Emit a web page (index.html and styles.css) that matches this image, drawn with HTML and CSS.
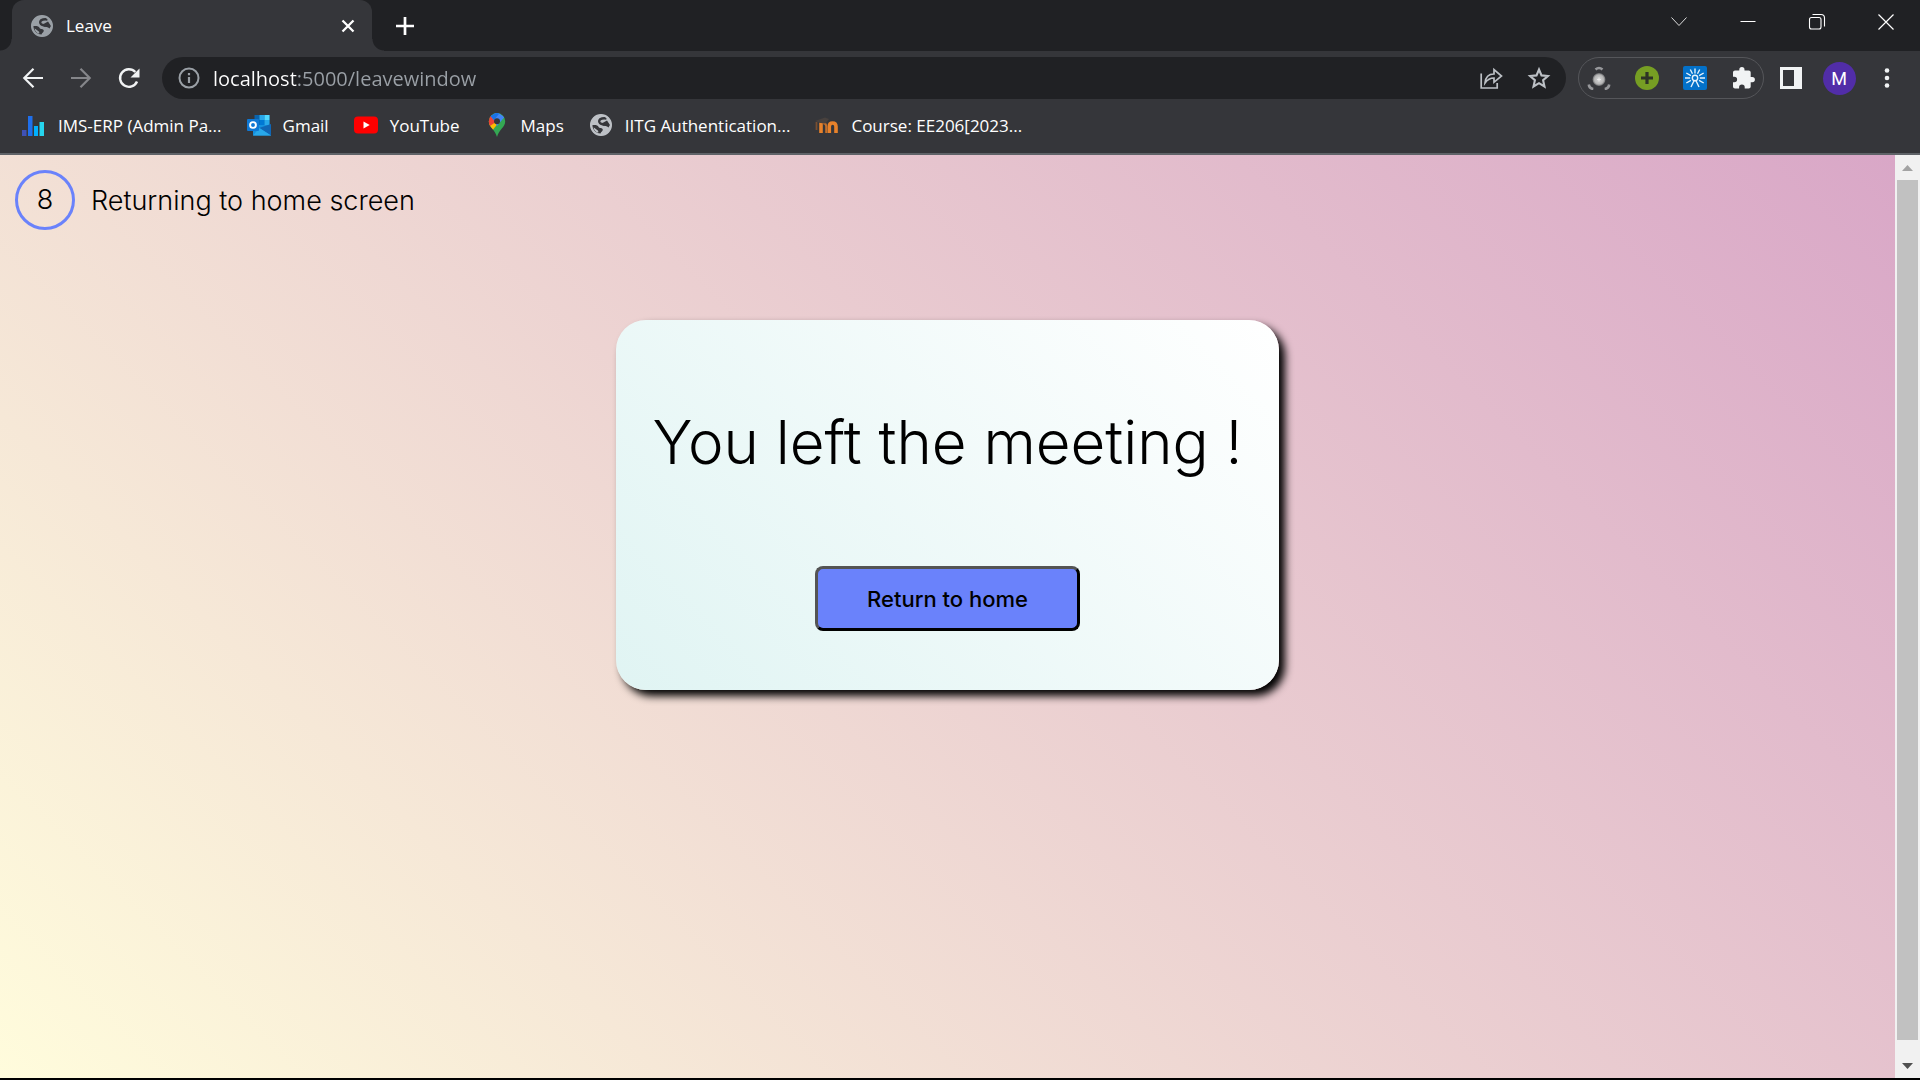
FILE: index.html
```html
<!DOCTYPE html>
<html lang="en">
<head>
<meta charset="utf-8">
<title>Leave</title>
<link rel="stylesheet" href="styles.css">
</head>
<body>
<svg class="defs" aria-hidden="true">
  <symbol id="globe" viewBox="0 0 24 24">
    <circle cx="12" cy="12" r="10.500" fill="currentColor"/>
    <path d="M17.500 5.500C14.500 4.800 11 5.500 10.300 7.500S11.500 11 14 11.200" fill="none" stroke="#35363a" stroke-width="2.400"/>
    <path d="M13.500 10L18 7.500 21 12l-1.500 2.500C18 12.500 15 13.500 13.500 12.400z" fill="#35363a"/>
    <path d="M3.300 12.200C6 11.800 8.800 12 9.600 14C10.200 15.500 13.500 14.500 13.800 16.500C14 18.300 12 18.500 11.500 20.600C7 20.500 3.300 17 3.300 12.200z" fill="#35363a"/>
    <path d="M4.500 14.500C6 15 7 16.500 8.500 17.200C9.500 17.800 9.500 19 9 19.800C6.500 19 4.800 17 4.500 14.500z" fill="currentColor"/>
    <circle cx="12" cy="12" r="10" fill="none" stroke="currentColor" stroke-width="2"/>
  </symbol>
</svg>

<header class="browser">
  <div class="tabstrip">
    <div class="tab">
      <svg class="icon tab-globe"><use href="#globe"/></svg>
      <span class="tab-title">Leave</span>
      <button class="plain tab-close" aria-label="Close tab"><svg class="icon" viewBox="0 0 24 24"><path d="M6.500 6.500l11 11M17.500 6.500l-11 11" stroke="#fff" stroke-width="2.300"/></svg></button>
    </div>
    <button class="plain new-tab" aria-label="New tab"><svg class="icon" viewBox="0 0 24 24"><path d="M12 3v18M3 12h18" stroke="#fff" stroke-width="2.700"/></svg></button>
    <div class="window-controls">
      <button class="plain" aria-label="Search tabs"><svg class="icon" viewBox="0 0 24 24" fill="none" stroke="#ddd" stroke-width="1"><path d="M4.500 7.500l7.500 8 7.500-8"/></svg></button>
      <button class="plain" aria-label="Minimize"><svg class="icon" viewBox="0 0 24 24"><path d="M4.500 11h15v1h-15z" fill="#fff"/></svg></button>
      <button class="plain" aria-label="Restore"><svg class="icon" viewBox="0 0 24 24" fill="none" stroke="#fff" stroke-width="1.100"><rect x="4.500" y="7.500" width="11.500" height="11.500" rx="2"/><path d="M7.500 4.500h8.500q3.500 0 3.500 3.500v8.500"/></svg></button>
      <button class="plain" aria-label="Close"><svg class="icon" viewBox="0 0 24 24"><path d="M4.500 4.500l15 15M19.500 4.500l-15 15" stroke="#fff" stroke-width="1.200"/></svg></button>
    </div>
  </div>

  <div class="toolbar">
    <button class="plain slot" aria-label="Back"><svg class="icon" viewBox="0 0 24 24" fill="none" stroke="#f1f3f4" stroke-width="2.200"><path d="M22 12H4M12.500 2.800L3.300 12l9.200 9.200"/></svg></button>
    <button class="plain slot" aria-label="Forward"><svg class="icon" viewBox="0 0 24 24" fill="none" stroke="#85868a" stroke-width="2.200"><path d="M2 12h18M11.500 2.800l9.200 9.200-9.200 9.200"/></svg></button>
    <button class="plain slot" aria-label="Reload"><svg class="icon" viewBox="0 0 24 24"><path d="M20 15.500A8.800 8.800 0 1 1 18.300 6" fill="none" stroke="#f1f3f4" stroke-width="2.400"/><path d="M22.500 2.500v9h-9z" fill="#f1f3f4"/></svg></button>
    <div class="omnibox">
      <svg class="icon" viewBox="0 0 24 24"><circle cx="12" cy="12" r="9.500" fill="none" stroke="#9aa0a6" stroke-width="2"/><path d="M10.900 11h2.200v6h-2.200zM10.900 7h2.200v2.200h-2.200z" fill="#9aa0a6"/></svg>
      <input class="url" type="text" aria-label="Address" value="localhost:5000/leavewindow">
      <button class="plain slot" aria-label="Share"><svg class="icon" viewBox="0 0 24 24" fill="none" stroke="#bdc1c6" stroke-width="1.700"><path d="M2.200 7.500v14.500h16v-5"/><path d="M6 17c.5-6 3.500-9 9-9V3.500L22.500 10 15 16.300V12c-4 0-6.500 1.500-9 5z"/></svg></button>
      <button class="plain slot" aria-label="Bookmark"><svg class="icon" viewBox="0 0 24 24"><path d="M12 3.500l2.500 5.900 6.400.6-4.800 4.200 1.400 6.300L12 17.200l-5.500 3.300 1.400-6.300L3.100 10l6.400-.6z" fill="none" stroke="#bdc1c6" stroke-width="2.100"/></svg></button>
    </div>
    <div class="extensions">
      <button class="plain" aria-label="Drone extension"><svg class="icon" viewBox="0 0 24 24"><defs><radialGradient id="ball"><stop offset="0" stop-color="#d8d8d8"/><stop offset=".7" stop-color="#b5b5b5"/><stop offset="1" stop-color="#66676a"/></radialGradient></defs><circle cx="12" cy="13.500" r="6.500" fill="url(#ball)"/><path d="M10 13.500h4M12 11.500v4" stroke="#eee" stroke-width=".8"/><g fill="none" stroke="#97989b" stroke-width="2.600"><path d="M8.500 3.500q3.500-3 7 0"/><path d="M1.800 18.500q.5 4 4.500 4.500"/><path d="M22.200 18.500q-.5 4-4.500 4.500"/></g></svg></button>
      <button class="plain" aria-label="Add extension"><svg class="icon" viewBox="0 0 24 24"><circle cx="12" cy="12" r="12" fill="#769e23"/><path d="M12 6v12M6 12h12" stroke="#2e3426" stroke-width="3.200"/></svg></button>
      <button class="plain" aria-label="Burst extension"><svg class="icon" viewBox="0 0 24 24"><rect width="24" height="24" rx="2" fill="#0371c9"/><g fill="none" stroke="#e5f2fb" stroke-width="1.400"><circle cx="12" cy="12" r="2.700"/><path d="M12 2.500v5M7.300 3.500l2.200 4.200M16.700 3.500l-2.200 4.200M3.300 7l4.600 2.600M20.700 7l-4.600 2.600M2 12h5.200M22 12h-5.200M3.300 17l4.600-2.600M20.700 17l-4.600-2.600M11 14.700l-3 6.300M13 14.700l3 6.300"/></g></svg></button>
      <button class="plain" aria-label="Extensions"><svg class="icon" viewBox="0 0 24 24"><path d="M21.300 11h-1.600V6.500c0-1.100-.9-2-2-2h-4.200V3.700a2.600 2.600 0 0 0-5.200 0v.8H4c-1.100 0-2 .9-2 2v4.200h1.300a2.800 2.800 0 0 1 0 5.600H2v4.200c0 1.100.9 2 2 2h4.100v-1.200a2.800 2.800 0 0 1 5.600 0v1.200h4c1.100 0 2-.9 2-2v-4.300h1.600a2.600 2.600 0 0 0 0-5.200z" fill="#f1f3f4"/></svg></button>
    </div>
    <button class="plain slot" aria-label="Side panel"><svg class="icon" viewBox="0 0 24 24"><path d="M1 1h22v22H1zM4 4v16h11V4z" fill="#f1f3f4" fill-rule="evenodd"/></svg></button>
    <button class="plain slot" aria-label="Profile"><span class="avatar">M</span></button>
    <button class="plain slot" aria-label="Menu"><svg class="icon" viewBox="0 0 24 24" fill="#f1f3f4"><circle cx="12" cy="4.500" r="2.300"/><circle cx="12" cy="12" r="2.300"/><circle cx="12" cy="19.500" r="2.300"/></svg></button>
  </div>

  <nav class="bookmarks" aria-label="Bookmarks">
    <a href="#"><svg class="icon" viewBox="0 0 24 24"><path d="M0 17h4.500v6H0z" fill="#3f51b5"/><path d="M6 3h4.500v20H6z" fill="#1f6feb"/><path d="M12 13h4v10h-4z" fill="#00b0ff"/><path d="M17.500 9H22v14h-4.500z" fill="#26d5ee"/></svg>IMS-ERP (Admin Pa...</a>
    <a href="#"><svg class="icon" viewBox="0 0 24 24"><path d="M7.500 2h15v10h-15z" fill="#0a64ad"/><path d="M12.500 2h5v5h-5z" fill="#28a8ea"/><path d="M17.500 2h5v5h-5z" fill="#50d9ff"/><path d="M12.500 7h5v5h-5z" fill="#0078d4"/><path d="M17.500 7h5v5h-5z" fill="#28a8ea"/><path d="M6 12h18v10.500H6z" fill="#1490df"/><path d="M24 11v11.500L12 15z" fill="#1066b5"/><path d="M6 22.500h18L12.500 15z" fill="#28a8ea"/><rect y="6" width="12" height="12" rx="1" fill="#0f78d4"/><circle cx="6" cy="12" r="2.900" fill="none" stroke="#fff" stroke-width="1.900"/></svg>Gmail</a>
    <a href="#"><svg class="icon" viewBox="0 0 24 24"><rect y="3.500" width="24" height="17" rx="4" fill="#f00"/><path d="M9.500 8.500v7l6.200-3.500z" fill="#fff"/></svg>YouTube</a>
    <a href="#"><svg class="icon" viewBox="0 0 24 24"><defs><clipPath id="pin"><path d="M12 0a8.200 8.200 0 0 1 8.200 8.200c0 6.300-6.200 8-8.200 15.800C10 16.200 3.800 14.500 3.800 8.200A8.200 8.200 0 0 1 12 0z"/></clipPath></defs><g clip-path="url(#pin)"><path d="M0 0h24v24H0z" fill="#34a853"/><path d="M0 9l6-1 8 1-7 9-7-1z" fill="#fbbc04"/><path d="M0 2h5.600l6.400 6.200-7.500 5L0 9z" fill="#ea4335"/><path d="M5.500 3L12-1l7.500 5-7.500 9-2.500-5z" fill="#4285f4"/><path d="M5.500 3L12-1l2.500 1.300L9 7z" fill="#1a73e8"/></g><circle cx="12" cy="8.200" r="3" fill="#35363a"/></svg>Maps</a>
    <a href="#"><svg class="icon link-globe"><use href="#globe"/></svg>IITG Authentication...</a>
    <a href="#"><svg class="icon" viewBox="0 0 24 24"><path d="M6 20V9.500M14.300 20v-6.500q0-3.500 3.300-3.500t3.400 3.500V20" fill="none" stroke="#e8822b" stroke-width="3.600"/><path d="M8.200 10.200q3 0 3 3.300V20" fill="none" stroke="#c46f2b" stroke-width="2"/><path d="M0 8l10-3.500 4 1.500-3.500 4.500-5-.5z" fill="#48413e"/><path d="M1.500 9v8" stroke="#7a4f30" stroke-width="1.800"/></svg>Course: EE206[2023...</a>
  </nav>
</header>

<div class="viewport">
  <main class="page">
    <div class="countdown">
      <span class="ring">8</span>
      <span>Returning to home screen</span>
    </div>
    <section class="card">
      <h1>You left the meeting !</h1>
      <button class="home-button">Return to home</button>
    </section>
  </main>
  <div class="scrollbar" aria-hidden="true">
    <svg class="arrow" viewBox="0 0 25 25"><path d="M7 16l5.500-6 5.500 6z" fill="#a3a3a3"/></svg>
    <div class="thumb"></div>
    <svg class="arrow" viewBox="0 0 25 25"><path d="M7 10l5.500 6 5.500-6z" fill="#505050"/></svg>
  </div>
</div>
</body>
</html>
```
FILE: styles.css
```css
* { box-sizing: border-box; }

body {
  margin: 0;
  min-height: 100vh;
  display: flex;
  flex-direction: column;
  background: #000;
  font-family: "Open Sans", "Noto Sans", sans-serif;
}

.defs { position: absolute; width: 0; height: 0; }

.icon { display: block; flex: none; width: 24px; height: 24px; }

.plain {
  display: flex;
  align-items: center;
  justify-content: center;
  padding: 0;
  border: 0;
  background: none;
}

.slot { flex: none; width: 48px; height: 42px; }

/* Browser frame */
.browser {
  background: #35363a;
  border-bottom: 2px solid #5f6368;
  color: #fff;
}

.tabstrip {
  display: flex;
  height: 51px;
  padding-left: 12px;
  background: #202124;
}

.tab {
  position: relative;
  display: flex;
  align-items: center;
  width: 360px;
  padding: 0 12px 0 18px;
  border-radius: 12px 12px 0 0;
  background: #35363a;
  font-size: 17px;
}

.tab::before,
.tab::after {
  content: "";
  position: absolute;
  bottom: 0;
  width: 12px;
  height: 12px;
}

.tab::before {
  right: 100%;
  background: radial-gradient(circle at 0 0, #202124 11px, #35363a 12px);
}

.tab::after {
  left: 100%;
  background: radial-gradient(circle at 100% 0, #202124 11px, #35363a 12px);
}

.tab-globe { color: #9aa0a6; }
.tab-title { flex: 1; margin-left: 12px; }
.new-tab { width: 66px; }

.window-controls {
  display: flex;
  height: 44px;
  margin-left: auto;
}

.window-controls .plain { width: 69px; }

.toolbar {
  display: flex;
  align-items: center;
  padding: 6px 9px 0;
}

.omnibox {
  flex: 1;
  display: flex;
  align-items: center;
  height: 42px;
  margin: 0 12px 0 9px;
  padding: 0 3px 0 15px;
  border-radius: 21px;
  background: #202124;
}

/* The host part of the address is white, the rest grey */
.url {
  flex: 1;
  min-width: 0;
  height: 42px;
  margin-left: 12px;
  padding: 0;
  border: 0;
  outline: 0;
  background: linear-gradient(to right, #fff 85px, #9aa0a6 85px);
  background-clip: text;
  -webkit-background-clip: text;
  color: transparent;
  font: 20px "Open Sans", "Noto Sans", sans-serif;
}

.extensions {
  display: flex;
  align-items: center;
  gap: 24px;
  height: 42px;
  margin-right: 3px;
  padding: 0 8px;
  border: 1px solid #55565a;
  border-radius: 21px;
}

.avatar {
  width: 33px;
  height: 33px;
  border-radius: 50%;
  background: #512da8;
  color: #fff;
  font: 18px/33px Roboto, sans-serif;
  text-align: center;
}

.bookmarks {
  display: flex;
  gap: 25px;
  height: 54px;
  padding: 0 22px 2px;
}

.bookmarks a {
  display: flex;
  align-items: center;
  gap: 12px;
  color: #fff;
  font-size: 17px;
  text-decoration: none;
}

.link-globe { color: #bdc1c6; }

/* Web page */
.viewport {
  flex: 1;
  display: flex;
  margin-bottom: 2px;
}

.page {
  flex: 1;
  padding: 15px;
  background: linear-gradient(45deg, #fffcdc, #d9a7c7);
  color: #000;
  font-family: Inter, sans-serif;
  font-weight: 300;
}

.countdown {
  display: flex;
  align-items: center;
  gap: 16px;
  font-size: 27px;
}

.ring {
  width: 60px;
  height: 60px;
  border: 3px solid #6a82fb;
  border-radius: 50%;
  line-height: 54px;
  text-align: center;
}

.card {
  display: flex;
  flex-direction: column;
  align-items: center;
  width: 663px;
  max-width: 100%;
  margin: 90px auto 0;
  padding: 86px 0 59px;
  border-radius: 30px;
  background: linear-gradient(45deg, #e0f4f3, #fff);
  box-shadow: 6px 6px 8px #000;
}

.card h1 {
  margin: 0 0 87px;
  font-size: 60px;
  font-weight: 300;
  line-height: 73px;
}

.home-button {
  width: 265px;
  height: 65px;
  border: 3px outset #000;
  border-radius: 8px;
  background: #6a82fb;
  color: #000;
  font: 500 22px Inter, sans-serif;
}

.scrollbar {
  display: flex;
  flex-direction: column;
  width: 25px;
  background: #f1f1f1;
}

.arrow { display: block; width: 25px; height: 25px; }

.thumb {
  flex: 1;
  margin: 0 2px 13px;
  background: #c1c1c1;
}
```
